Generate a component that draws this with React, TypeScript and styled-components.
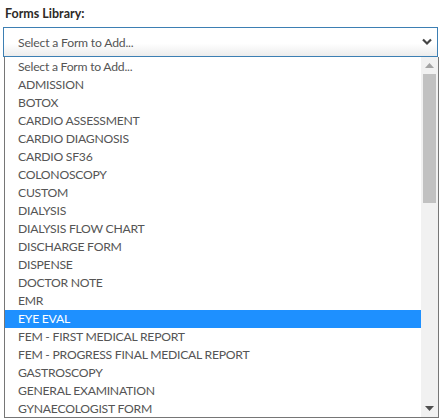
import React from "react";
import styled, { createGlobalStyle } from "styled-components";

const FORMS = [
  "Select a Form to Add...",
  "ADMISSION",
  "BOTOX",
  "CARDIO ASSESSMENT",
  "CARDIO DIAGNOSIS",
  "CARDIO SF36",
  "COLONOSCOPY",
  "CUSTOM",
  "DIALYSIS",
  "DIALYSIS FLOW CHART",
  "DISCHARGE FORM",
  "DISPENSE",
  "DOCTOR NOTE",
  "EMR",
  "EYE EVAL",
  "FEM - FIRST MEDICAL REPORT",
  "FEM - PROGRESS FINAL MEDICAL REPORT",
  "GASTROSCOPY",
  "GENERAL EXAMINATION",
  "GYNAECOLOGIST FORM",
];

const SELECTED = "EYE EVAL";

const GlobalStyle = createGlobalStyle`
  html, body {
    margin: 0;
    background: #fff;
    font-family: "Lato", "Liberation Sans", sans-serif;
  }
`;

const Page = styled.div`
  width: 440px;
  height: 419px;
  overflow: hidden;
  padding: 6px 0 0 3px;
  box-sizing: border-box;
`;

const Label = styled.div`
  font-size: 12.5px;
  font-weight: 700;
  color: #2e2a28;
  padding-left: 2px;
  height: 21px;
  line-height: 16px;
`;

const SelectBox = styled.div`
  width: 435px;
  height: 30px;
  box-sizing: border-box;
  border: 1px solid #3d7fb3;
  background: linear-gradient(#fff 55%, #ececec);
  display: flex;
  align-items: center;
  justify-content: space-between;
  padding: 0 5px 0 14px;
  font-size: 12.2px;
  letter-spacing: -0.2px;
  color: #555;
`;

const Chevron = styled.svg`
  width: 10px;
  height: 8px;
`;

const Dropdown = styled.div`
  margin-left: 1px;
  width: 435px;
  height: 361px;
  box-sizing: border-box;
  border: 1px solid #767676;
  border-top: none;
  display: flex;
  overflow: hidden;
  background: #fff;
`;

const List = styled.ul`
  flex: 1;
  list-style: none;
  margin: 0;
  padding: 1px 0 0;
`;

const Item = styled.li<{ $active?: boolean }>`
  height: 18px;
  line-height: 18px;
  padding-left: 13px;
  font-size: 12.2px;
  letter-spacing: -0.25px;
  white-space: nowrap;
  color: ${(p) => (p.$active ? "#fff" : "#555")};
  background: ${(p) => (p.$active ? "#1e90ff" : "transparent")};
`;

const Scrollbar = styled.div`
  width: 17px;
  background: #f1f1f1;
  display: flex;
  flex-direction: column;
  align-items: center;
`;

const ArrowBtn = styled.div`
  height: 17px;
  width: 17px;
  display: flex;
  align-items: center;
  justify-content: center;
`;

const Thumb = styled.div`
  width: 13px;
  height: 129px;
  background: #c1c1c1;
`;

const Spacer = styled.div`
  flex: 1;
`;

const Arrow = ({ down }: { down?: boolean }) => (
  <svg width="9" height="5" viewBox="0 0 9 5">
    <path
      d={down ? "M0 0H9L4.5 5Z" : "M0 5H9L4.5 0Z"}
      fill={down ? "#505050" : "#a3a3a3"}
    />
  </svg>
);

const App = () => (
  <>
    <GlobalStyle />
    <Page>
      <Label>Forms Library:</Label>
      <SelectBox>
        <span>Select a Form to Add...</span>
        <Chevron viewBox="0 0 10 8">
          <path d="M1 1.5L5 5.5L9 1.5" stroke="#444" strokeWidth="2.2" fill="none" />
        </Chevron>
      </SelectBox>
      <Dropdown>
        <List>
          {FORMS.map((f) => (
            <Item key={f} $active={f === SELECTED}>
              {f}
            </Item>
          ))}
        </List>
        <Scrollbar>
          <ArrowBtn>
            <Arrow />
          </ArrowBtn>
          <Thumb />
          <Spacer />
          <ArrowBtn>
            <Arrow down />
          </ArrowBtn>
        </Scrollbar>
      </Dropdown>
    </Page>
  </>
);

export default App;
